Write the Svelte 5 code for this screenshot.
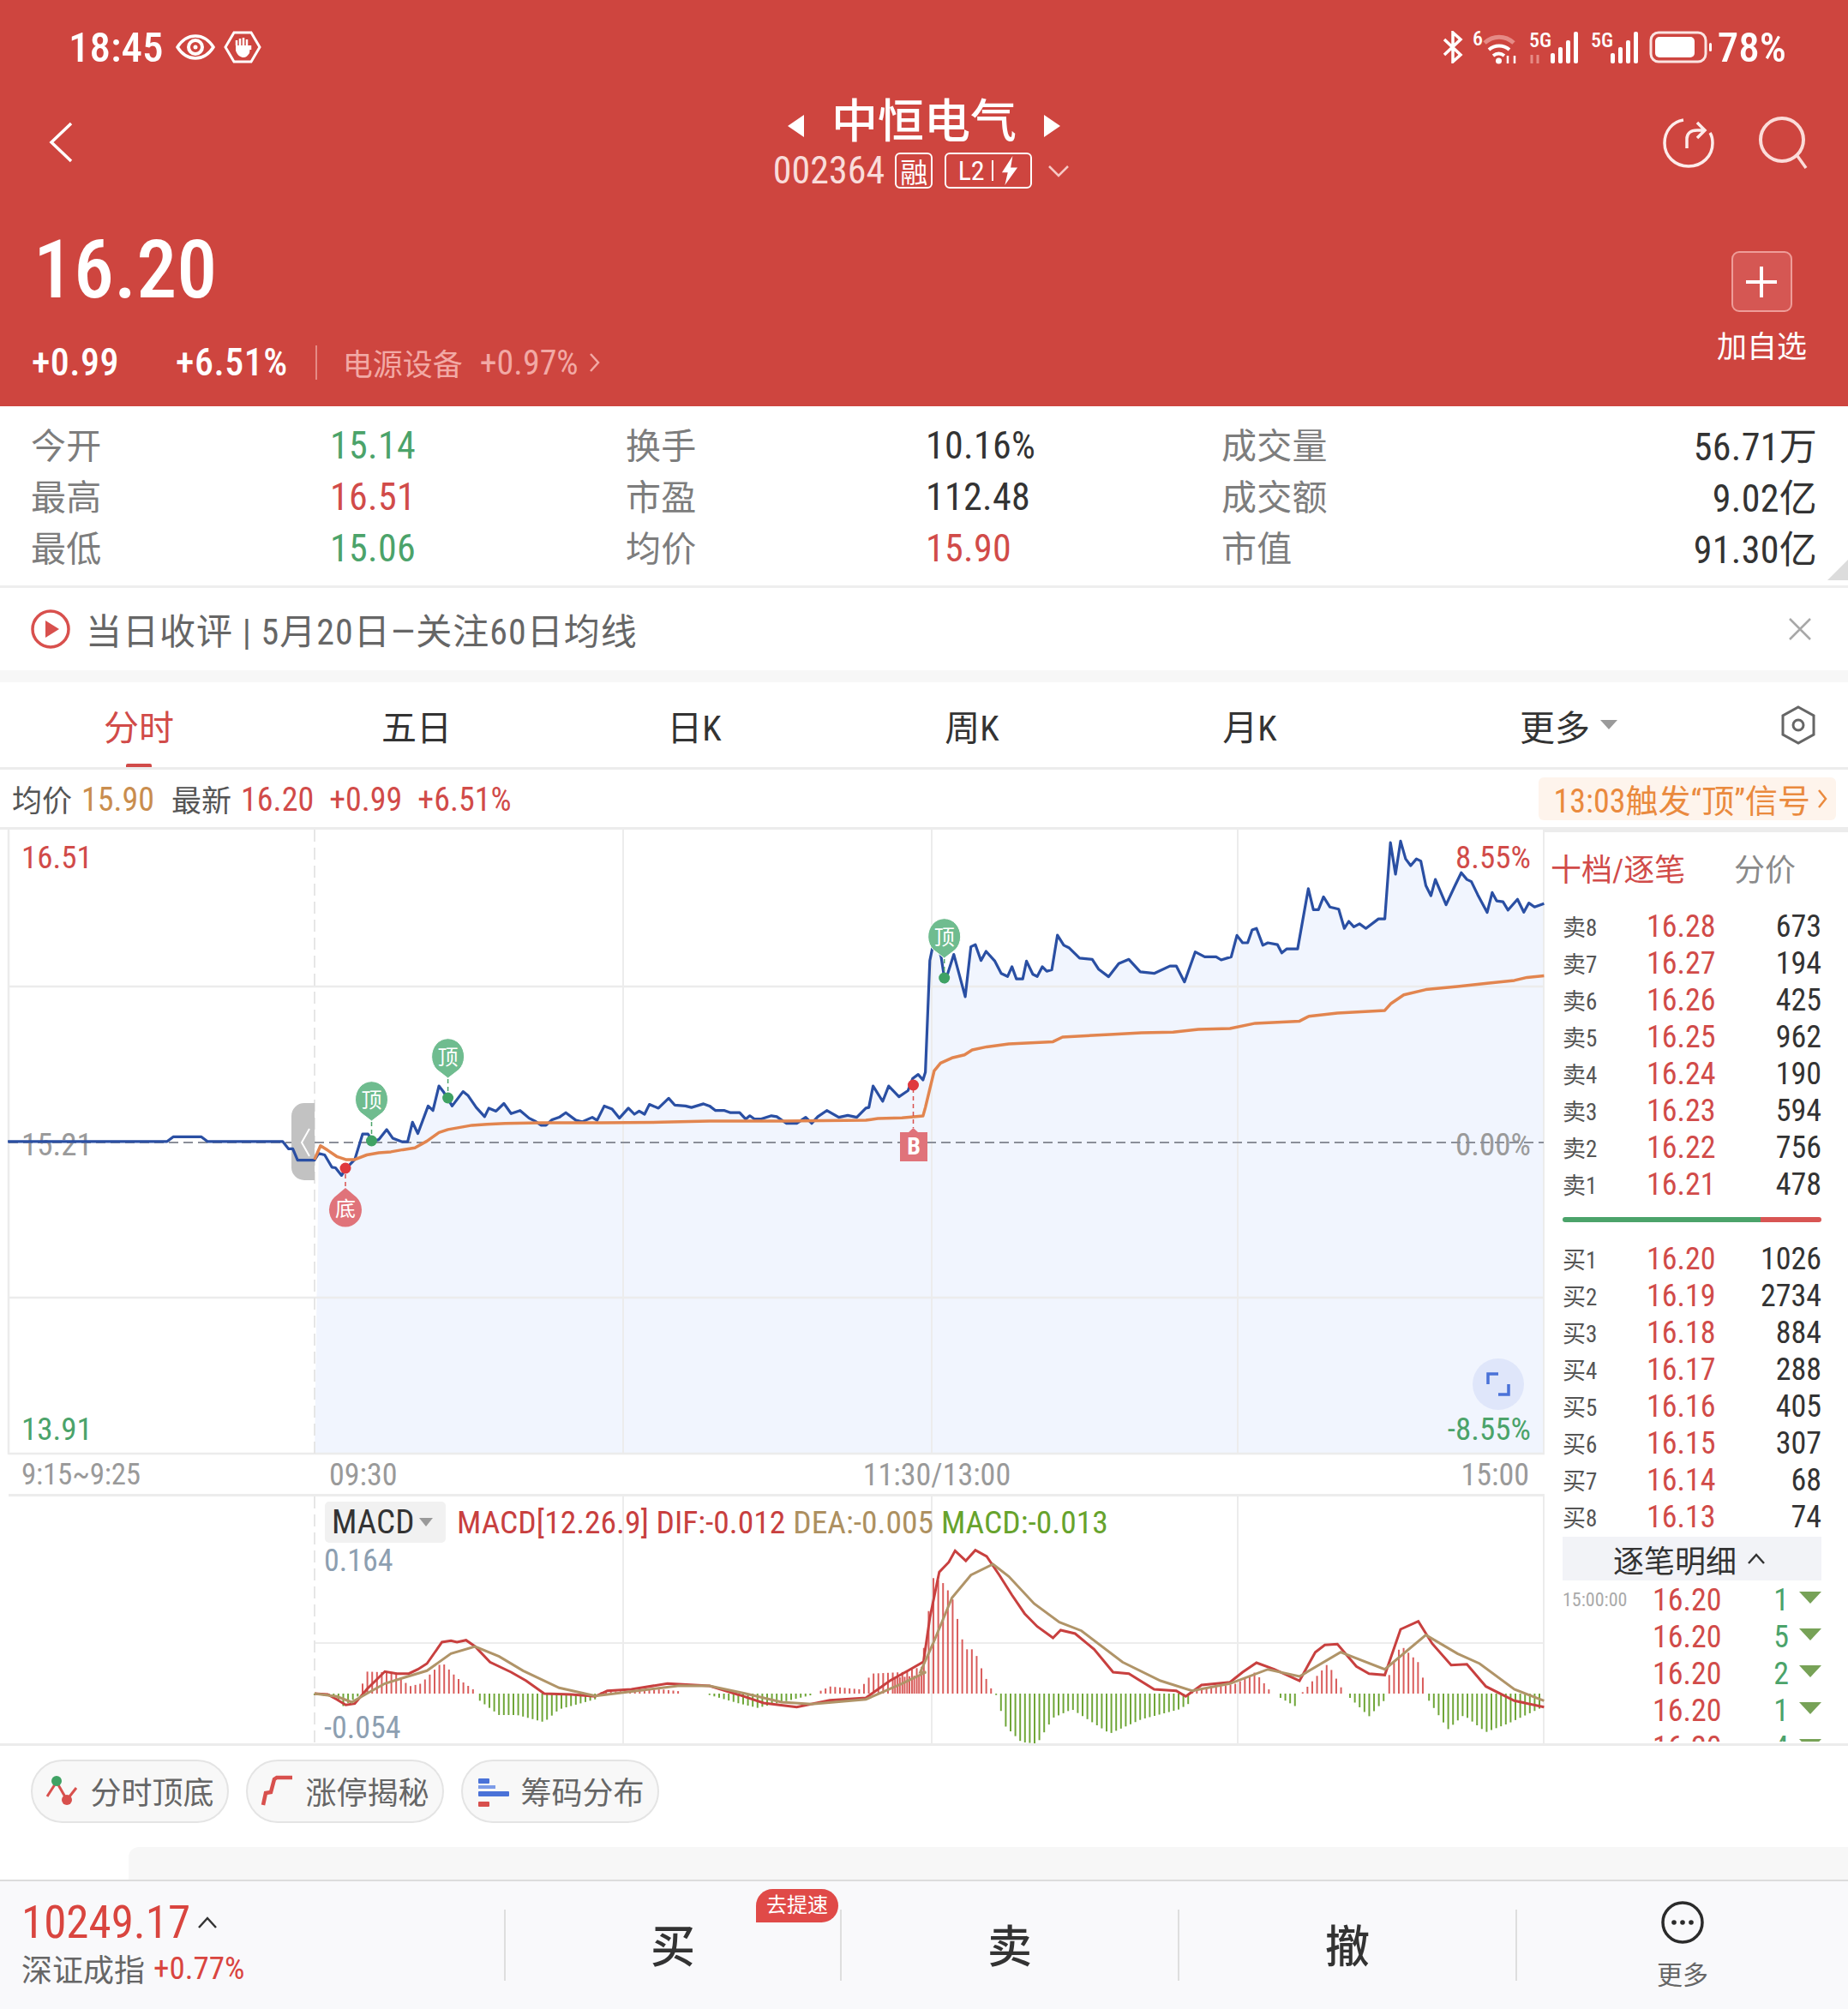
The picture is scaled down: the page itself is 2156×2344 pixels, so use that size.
<script>
  // page coords are traced from crops: a = left crops, b = right crops
  const a = ([x, y]) => [x / 1.4255, 960 + y / 2.8];
  const b = ([x, y]) => [1000 + x / 1.3564, 960 + y / 2.8];
  const ma = ([x, y]) => [x / 1.4255, 1700 + y / 3];
  const mb = ([x, y]) => [1000 + x / 1.3564, 1700 + y / 3];
  const str = (pts) => pts.map(([x, y]) => `${x.toFixed(1)},${y.toFixed(1)}`).join(' ');

  const price = [
    ...[[13,1041],[278,1041],[288,1026],[335,1026],[345,1041],[470,1041],[480,1065],[487,1065],[495,1102],[523,1102],[530,1080],[540,1085],[552,1125],[558,1127],[568,1152],[575,1130],[590,1100],[603,1017],[612,1017],[620,1040],[630,1035],[643,1002],[653,1030],[668,1042],[678,1042],[686,978],[695,1015],[712,925],[720,940],[730,860],[738,880],[752,925],[770,878],[778,890],[792,930],[806,960],[813,932],[825,942],[838,917],[850,950],[865,940],[880,965],[890,975],[900,988],[908,988],[918,970],[930,962],[941,947],[958,972],[968,977],[985,962],[993,972],[1005,925],[1018,935],[1030,965],[1045,932],[1055,952],[1063,942],[1072,952],[1080,920],[1095,932],[1112,900],[1122,922],[1140,925],[1150,930],[1170,918],[1180,925],[1190,940],[1205,940],[1215,947],[1230,947],[1240,968],[1247,957],[1255,968],[1265,968],[1283,957],[1292,960],[1308,982],[1325,982],[1340,962],[1350,982],[1360,960],[1375,940],[1395,962],[1410,956],[1425,962],[1440,932],[1445,930],[1452,860],[1468,910],[1478,860],[1495,895],[1510,875],[1518,835],[1527,822],[1535,840]].map(a),
    ...[[108,815],[115,450],[123,370],[133,440],[139,520],[153,430],[171,568],[180,405],[187,398],[196,450],[204,420],[218,452],[228,492],[238,502],[245,470],[252,510],[262,510],[268,452],[278,495],[285,502],[293,470],[300,485],[308,480],[317,367],[327,400],[335,408],[352,442],[372,446],[382,478],[398,503],[414,460],[430,446],[448,487],[470,492],[495,468],[505,468],[518,520],[535,422],[550,438],[568,438],[576,448],[592,438],[601,368],[610,392],[618,392],[625,350],[632,345],[642,400],[650,392],[665,398],[672,425],[680,412],[697,412],[714,215],[722,284],[730,284],[738,242],[748,275],[762,282],[771,345],[778,322],[786,340],[795,330],[805,345],[825,314],[835,314],[844,65],[852,168],[860,60],[868,118],[876,140],[885,118],[892,125],[900,205],[908,238],[915,185],[932,268],[945,210],[956,163],[965,185],[972,192],[982,235],[997,293],[1005,228],[1012,255],[1022,258],[1030,285],[1045,250],[1055,292],[1063,262],[1072,275],[1087,264]].map(b)
  ];
  const average = [
    ...[[523,1100],[533,1055],[545,1070],[560,1090],[575,1100],[590,1100],[610,1085],[630,1078],[650,1075],[670,1068],[690,1062],[710,1040],[730,1012],[745,1002],[765,995],[785,988],[810,985],[840,982],[900,980],[1000,980],[1100,978],[1180,974],[1300,974],[1440,972],[1460,966],[1500,964],[1535,958]].map(a),
    ...[[108,930],[122,810],[132,785],[150,768],[170,758],[182,742],[205,732],[240,722],[310,715],[325,700],[350,697],[400,692],[450,686],[500,684],[540,675],[590,672],[630,655],[700,648],[715,632],[760,622],[835,613],[845,590],[865,562],[900,545],[950,535],[1000,524],[1040,515],[1060,505],[1087,500]].map(b)
  ];
  const open = price.filter(([x]) => x >= 367);
  const area = [[367, 1697], ...open, [1801, 1697]];

  const dif = [
    ...[[523,825],[545,828],[560,845],[575,865],[590,860],[610,810],[640,748],[660,755],[680,755],[695,740],[710,720],[735,645],[750,640],[760,645],[775,638],[790,660],[815,715],[850,750],[875,780],[905,825],[950,828],[990,835],[1010,815],[1050,810],[1110,790],[1180,798],[1230,830],[1270,858],[1325,872],[1380,848],[1440,840],[1480,780],[1510,745],[1535,715]].map(ma),
    ...[[105,715],[115,560],[130,400],[145,365],[155,325],[172,360],[187,323],[205,345],[225,410],[245,480],[265,545],[285,590],[310,630],[322,603],[345,615],[375,670],[405,750],[430,755],[470,810],[505,815],[520,835],[545,795],[590,785],[610,750],[632,717],[660,740],[700,780],[725,680],[740,655],[760,652],[790,730],[810,755],[835,760],[860,600],[888,572],[910,650],[940,725],[965,722],[995,800],[1040,850],[1087,872]].map(mb)
  ];
  const dea = [
    ...[[523,825],[560,835],[585,855],[610,825],[640,790],[670,770],[710,745],[750,685],[790,660],[830,695],[870,745],[930,805],[990,833],[1060,815],[1130,797],[1180,798],[1240,825],[1300,855],[1350,862],[1440,845],[1500,790],[1540,750]].map(ma),
    ...[[100,750],[120,650],[150,490],[180,410],[215,372],[240,415],[280,510],[320,575],[355,605],[420,715],[480,780],[530,815],[590,790],[650,740],[700,765],[765,680],[835,740],[900,620],[950,685],[985,720],[1040,810],[1087,850]].map(mb)
  ];

  const ZERO = 1975;
  const histogram = [
    { up: false, pts: [[523,830],[560,835],[570,870],[595,835]].map(ma) },
    { up: true, pts: [[603,790],[610,748],[660,752],[680,800],[700,790],[735,715],[760,770],[790,815]].map(ma) },
    { up: false, pts: [[798,850],[830,900],[860,900],[905,925],[930,880],[990,845]].map(ma) },
    { up: true, pts: [[1000,820],[1100,810],[1135,818]].map(ma) },
    { up: false, pts: [[1180,830],[1230,860],[1260,875],[1350,830]].map(ma) },
    { up: true, pts: [[1365,815],[1380,800],[1430,810],[1450,755],[1500,750],[1535,730]].map(ma) },
    { up: true, pts: [[60,770],[100,760],[120,420],[135,435],[150,485],[160,575],[170,670],[185,670],[200,755],[215,820]].map(mb) },
    { up: false, pts: [[220,830],[235,940],[260,995],[285,1000],[310,910],[340,880],[400,965],[450,915],[510,880],[525,860]].map(mb) },
    { up: true, pts: [[530,815],[600,790],[630,750],[655,820]].map(mb) },
    { up: false, pts: [[670,840],[698,875]].map(mb) },
    { up: true, pts: [[705,820],[745,720],[770,820]].map(mb) },
    { up: false, pts: [[780,840],[810,905],[838,840]].map(mb) },
    { up: true, pts: [[842,760],[860,655],[890,720],[900,815]].map(mb) },
    { up: false, pts: [[905,850],[935,950],[960,900],[995,960],[1030,930],[1087,870]].map(mb) }
  ];
  const bars = [];
  for (const seg of histogram) {
    const start = seg.pts[0][0];
    const end = seg.pts[seg.pts.length - 1][0];
    for (let x = start; x <= end; x += 5.6) {
      const i = Math.max(1, seg.pts.findIndex((p) => p[0] >= x));
      const [x0, y0] = seg.pts[i - 1];
      const [x1, y1] = seg.pts[i];
      bars.push({ x, y: y0 + ((x - x0) / (x1 - x0 || 1)) * (y1 - y0), up: seg.up });
    }
  }

  const stats = [
    ['今开', '15.14', 'green', '换手', '10.16%', '', '成交量', '56.71万'],
    ['最高', '16.51', 'red', '市盈', '112.48', '', '成交额', '9.02亿'],
    ['最低', '15.06', 'green', '均价', '15.90', 'red', '市值', '91.30亿']
  ];
  const asks = [['卖8','16.28','673'],['卖7','16.27','194'],['卖6','16.26','425'],['卖5','16.25','962'],['卖4','16.24','190'],['卖3','16.23','594'],['卖2','16.22','756'],['卖1','16.21','478']];
  const bids = [['买1','16.20','1026'],['买2','16.19','2734'],['买3','16.18','884'],['买4','16.17','288'],['买5','16.16','405'],['买6','16.15','307'],['买7','16.14','68'],['买8','16.13','74']];
  const ticks = [['15:00:00','16.20','1'],['','16.20','5'],['','16.20','2'],['','16.20','1'],['','16.20','4']];
  const tabs = ['分时', '五日', '日K', '周K', '月K'];
  const tops = [[433.5, 1283, 1331], [522.6, 1233, 1281], [1101.7, 1093, 1141]];
</script>

<div class="page">
  <header class="head">
    <div class="status">
      <div class="status-left">
        <span class="clock">18:45</span>
        <svg width="46" height="30" viewBox="0 0 46 30" fill="none" stroke="#fff"><path d="M2 15C9 4 16 2 23 2s14 2 21 13c-7 11-14 13-21 13S9 26 2 15z" stroke-width="3.5"/><circle cx="23" cy="15" r="8" stroke-width="4"/><circle cx="23" cy="15" r="2.5" fill="#fff" stroke="none"/></svg>
        <svg class="hand" width="44" height="38" viewBox="0 0 44 38" fill="none"><path d="M12 2h20l10 17-10 17H12L2 19z" stroke="#fff" stroke-width="3"/><path d="M15 17v-6M19 18v-9M23 18v-10M27 18v-8M31 22v-5" stroke="#fff" stroke-width="2.500"/><path d="M14 17h17l-1 9c-2 3-4 5-7 5s-7-2-9-8z" fill="#fff"/></svg>
      </div>
      <div class="status-right">
        <svg class="bt" width="26" height="38" viewBox="0 0 26 38" fill="none" stroke="#fff" stroke-width="3.5"><path d="M3 10l19 18-9 8V2l9 8L3 28"/></svg>
        <svg width="56" height="54" viewBox="0 -6 56 54" fill="none"><text x="0" y="19" class="sig">6</text><path d="M14 16c10-9 24-9 34 0" stroke="#e58b86" stroke-width="5"/><path d="M19 24c7-6 17-6 24 0M24 31c4-3 9-3 13 0" stroke="#fff" stroke-width="4"/><circle cx="30.500" cy="37" r="3.500" fill="#fff"/><path d="M41 40v-9M49 31v9" stroke="#fff" stroke-width="2.500"/></svg>
        <svg width="62" height="52" viewBox="0 -6 62 52"><text x="0" y="20" class="sig">5G</text><g fill="#fff"><rect x="25" y="27" width="5" height="12" rx="2"/><rect x="34" y="20" width="5" height="19" rx="2"/><rect x="43" y="12" width="5" height="27" rx="2"/><rect x="52" y="2" width="5" height="37" rx="2"/></g><path d="M3 39v-10M10 29v10" stroke="#e58b86" stroke-width="3"/></svg>
        <svg width="58" height="52" viewBox="0 -6 58 52"><text x="0" y="20" class="sig">5G</text><g fill="#fff"><rect x="23" y="27" width="5" height="12" rx="2"/><rect x="32" y="20" width="5" height="19" rx="2"/><rect x="41" y="12" width="5" height="27" rx="2"/><rect x="50" y="2" width="5" height="37" rx="2"/></g></svg>
        <svg width="74" height="38" viewBox="0 0 74 38" fill="none"><rect x="2" y="2" width="64" height="34" rx="9" stroke="#fbe4e2" stroke-width="3"/><rect x="7" y="7" width="46" height="24" rx="5" fill="#fff"/><rect x="70" y="14" width="3" height="10" rx="1.500" fill="#fff"/></svg>
        <span class="clock batt">78%</span>
      </div>
    </div>

    <div class="nav">
      <svg class="back" width="30" height="48" viewBox="0 0 30 48" fill="none" stroke="#fff" stroke-width="3.500"><path d="M27 2L4 24l23 22"/></svg>
      <div class="nav-mid">
        <div class="title-row">
          <span class="tri-l"></span>
          <span class="title">中恒电气</span>
          <span class="tri-r"></span>
        </div>
        <div class="code-row">
          <span class="code">002364</span>
          <span class="tag rong">融</span>
          <span class="tag l2">L2<i class="bar"></i>
            <svg width="22" height="34" viewBox="0 0 18 30"><path d="M12 0L1 17h6L4 30l13-18h-7z" fill="#fff"/></svg>
          </span>
          <svg width="26" height="15" viewBox="0 0 26 15" fill="none" stroke="#f6c9c5" stroke-width="2.500"><path d="M2 2l11 11L24 2"/></svg>
        </div>
      </div>
      <div class="nav-icons">
        <svg width="60" height="62" viewBox="0 0 60 62" fill="none" stroke="#fdeceb" stroke-width="3.500"><path d="M24 5C11 7 2 18 2 32c0 15 12 27 28 27s28-12 28-27c0-5-1-9-3-12"/><path d="M28 38V27c0-6 4-10 12-10h7M40 8l9 9-9 9"/></svg>
        <svg width="60" height="62" viewBox="0 0 60 62" fill="none"><circle cx="27" cy="28" r="25" stroke="#fbdcd9" stroke-width="4"/><path d="M45 47l10 14" stroke="#fbdcd9" stroke-width="3.500"/></svg>
      </div>
    </div>

    <div class="quote">
      <div>
        <div class="last">16.20</div>
        <div class="change">
          <span class="c1">+0.99</span>
          <span class="c2">+6.51%</span>
          <i class="sep"></i>
          <span class="sector">电源设备</span>
          <span class="sector-num">+0.97%</span>
          <svg width="13" height="24" viewBox="0 0 13 24" fill="none" stroke="#f2a9a5" stroke-width="2.500"><path d="M2 2l9 10-9 10"/></svg>
        </div>
      </div>
      <div class="add">
        <div class="add-box">
          <svg width="36" height="36" viewBox="0 0 36 36" stroke="#fff" stroke-width="4"><path d="M18 0v36M0 18h36"/></svg>
        </div>
        <span>加自选</span>
      </div>
    </div>
  </header>

  <section class="stats">
    {#each stats as r}
      <span class="lbl">{r[0]}</span><span class="val {r[2]}">{r[1]}</span>
      <span class="lbl">{r[3]}</span><span class="val {r[5]}">{r[4]}</span>
      <span class="lbl">{r[6]}</span><span class="val end">{r[7]}</span>
    {/each}
    <i class="corner"></i>
  </section>

  <section class="news">
    <svg width="46" height="46" viewBox="0 0 46 46"><circle cx="23" cy="23" r="21" fill="none" stroke="#d8504d" stroke-width="3.500"/><path d="M17 13l16 10-16 10z" fill="#d8504d"/></svg>
    <span class="news-text">当日收评 | 5月20日—关注60日均线</span>
    <svg class="close" width="28" height="28" viewBox="0 0 28 28" stroke="#a8a8a8" stroke-width="2.500"><path d="M2 2l24 24M26 2L2 26"/></svg>
  </section>
  <div class="gap"></div>

  <nav class="tabs">
    {#each tabs as t, i}
      <span class="tab" class:on={i === 0}>{t}</span>
    {/each}
    <span class="tab">更多<i class="more-tri"></i></span>
    <span class="tab">
      <svg width="42" height="46" viewBox="0 0 42 46" fill="none" stroke="#666" stroke-width="3"><path d="M21 2l18 10v22L21 44 3 34V12z"/><circle cx="21" cy="23" r="6"/></svg>
    </span>
  </nav>

  <div class="info">
    <span class="i-l">均价</span><span class="i-n orange">15.90</span>
    <span class="i-l g">最新</span><span class="i-n red">16.20</span>
    <span class="i-n red g2">+0.99</span><span class="i-n red g2">+6.51%</span>
    <span class="signal">13:03触发“顶”信号
      <svg width="12" height="24" viewBox="0 0 12 24" fill="none" stroke="#ea8a3e" stroke-width="2.500"><path d="M2 2l8 10-8 10"/></svg>
    </span>
  </div>

  <div class="board">
    <div class="charts">
      <svg class="price-chart" width="1802" height="730" viewBox="0 968 1802 730">
        <polygon points={str(area)} fill="#f1f5fe" />
        <g stroke="#ececec" stroke-width="2.500">
          <path d="M10 1151H1802M10 1514H1802M10 1696H1802M10 968V1697"/>
          <path d="M727 968V1697M1087 968V1697M1444 968V1697M1801 968V1697" stroke-width="2"/>
        </g>
        <path d="M367 968V1697" stroke="#e6e6e6" stroke-width="2" stroke-dasharray="14 7"/>

        <text x="25" y="1013" class="axis red-t">16.51</text>
        <text x="25" y="1348" class="axis gray-t">15.21</text>
        <text x="25" y="1680" class="axis green-t">13.91</text>
        <text x="1786" y="1013" class="axis red-t" text-anchor="end">8.55%</text>
        <text x="1786" y="1348" class="axis gray-t" text-anchor="end">0.00%</text>
        <text x="1786" y="1680" class="axis green-t" text-anchor="end">-8.55%</text>

        <path d="M10 1333H1801" stroke="#8b8f99" stroke-width="2" stroke-dasharray="11 6"/>
        <path d="M367 1287h-12a15 15 0 0 0-15 15v60a15 15 0 0 0 15 15h12z" fill="#c2c2c2"/>
        <path d="M361 1317l-9 16 9 16" fill="none" stroke="#fff" stroke-width="2"/>

        <polyline points={str(price)} fill="none" stroke="#2a4fa3" stroke-width="3.200" stroke-linejoin="round"/>
        <polyline points={str(average)} fill="none" stroke="#e2854f" stroke-width="3.500" stroke-linejoin="round"/>

        {#each tops as [x, pin, dot]}
          <path d="M{x} {pin + 25}l-13-10a19 21 0 1 1 26 0z" fill="#6fbc8f" stroke="#fff" stroke-width="1"/>
          <text x={x} y={pin + 9} class="pin">顶</text>
          <path d="M{x} {pin + 26}V{dot}" stroke="#4ba36a" stroke-width="1.500" stroke-dasharray="5 4"/>
          <circle cx={x} cy={dot} r="6.500" fill="#3fa264"/>
        {/each}

        <path d="M403 1370V1390" stroke="#d8504d" stroke-width="1.500" stroke-dasharray="5 4"/>
        <circle cx="403" cy="1363" r="6.500" fill="#e0393e"/>
        <path d="M403 1386l-13 11a19 20 0 1 0 26 0z" fill="#e0737a"/>
        <text x="403" y="1419" class="pin">底</text>

        <path d="M1065.500 1270V1316" stroke="#d8504d" stroke-width="1.500" stroke-dasharray="5 4"/>
        <circle cx="1065.500" cy="1266" r="6.500" fill="#e0393e"/>
        <path d="M1050 1321h10l5.500-5 5.500 5h11v34h-32z" fill="#e0737a"/>
        <text x="1066" y="1347" class="pin b">B</text>

        <circle cx="1748" cy="1615" r="30" fill="#dfe6fa"/>
        <path d="M1736 1615v-12h12M1760 1615v12h-12" fill="none" stroke="#4a72d8" stroke-width="3.500"/>
      </svg>

      <div class="axis-row">
        <span class="pre">9:15~9:25</span>
        <div class="times">
          <span>09:30</span><span class="mid">11:30/13:00</span><span>15:00</span>
        </div>
      </div>

      <div class="macd">
        <svg width="1802" height="288" viewBox="0 1745 1802 288">
          <g stroke="#ececec" stroke-width="2">
            <path d="M367 1916H1802M727 1745V2033M1087 1745V2033M1444 1745V2033M1801 1745V2033"/>
          </g>
          <path d="M367 1745V2033" stroke="#e6e6e6" stroke-width="2" stroke-dasharray="14 7"/>
          {#each bars as bar}
            <line x1={bar.x} x2={bar.x} y1={ZERO} y2={bar.y} stroke={bar.up ? '#d95c5b' : '#6fa638'} stroke-width="2"/>
          {/each}
          <polyline points={str(dif)} fill="none" stroke="#c8403f" stroke-width="3"/>
          <polyline points={str(dea)} fill="none" stroke="#b09468" stroke-width="3"/>
        </svg>
        <div class="legend">
          <span class="chip">MACD<i class="chip-tri"></i></span>
          <span class="m-red">MACD[12.26.9] DIF:-0.012</span>
          <span class="m-tan">DEA:-0.005</span>
          <span class="m-green">MACD:-0.013</span>
        </div>
        <span class="scale hi">0.164</span>
        <span class="scale lo">-0.054</span>
      </div>
    </div>

    <aside class="book">
      <div class="book-head"><span class="on">十档/逐笔</span><span>分价</span></div>
      {#each asks as r}
        <div class="row"><span class="side">{r[0]}</span><span class="p">{r[1]}</span><span class="q">{r[2]}</span></div>
      {/each}
      <div class="ratio"><i class="buy"></i><i class="sell"></i></div>
      {#each bids as r}
        <div class="row"><span class="side">{r[0]}</span><span class="p">{r[1]}</span><span class="q">{r[2]}</span></div>
      {/each}
      <div class="detail">逐笔明细
        <svg width="22" height="14" viewBox="0 0 22 14" fill="none" stroke="#333" stroke-width="2.500"><path d="M2 12L11 2l9 10"/></svg>
      </div>
      <div class="ticks">
        {#each ticks as r}
          <div class="tick"><span class="t">{r[0]}</span><span class="p">{r[1]}</span><span class="v">{r[2]}</span><i class="down"></i></div>
        {/each}
      </div>
    </aside>
  </div>

  <div class="pills">
    <span class="pill">
      <svg width="40" height="40" viewBox="0 0 40 40" fill="none"><path d="M2 26L13 9" stroke="#d8504d" stroke-width="3"/><path d="M13 9l12 21" stroke="#d8504d" stroke-width="3"/><path d="M25 30l11-14" stroke="#d8504d" stroke-width="3"/><circle cx="13" cy="8" r="6" fill="#3fa264"/><circle cx="25" cy="30" r="6" fill="#d8504d"/></svg>
      <span class="pill-text">分时顶底</span>
    </span>
    <span class="pill">
      <svg width="40" height="40" viewBox="0 0 40 40" fill="none" stroke="#d8504d" stroke-width="4.500"><path d="M3 36l3-14 6-1 4-15 3-2h18"/></svg>
      <span class="pill-text">涨停揭秘</span>
    </span>
    <span class="pill">
      <svg width="40" height="40" viewBox="0 0 40 40"><rect x="3" y="5" width="13" height="6" rx="1" fill="#4a72d8"/><rect x="3" y="13" width="20" height="4" fill="#7d9ce8"/><rect x="3" y="20" width="36" height="6" rx="1" fill="#4a72d8"/><rect x="3" y="32" width="13" height="6" rx="1" fill="#d8504d"/></svg>
      <span class="pill-text">筹码分布</span>
    </span>
  </div>
  <div class="strip"><i></i></div>

  <footer class="bottom">
    <div class="index">
      <div class="index-top">
        <span class="idx">10249.17</span>
        <svg width="24" height="15" viewBox="0 0 24 15" fill="none" stroke="#333" stroke-width="2.500"><path d="M2 13L12 2l10 11"/></svg>
      </div>
      <div class="index-sub"><span>深证成指</span><span class="idx-pct">+0.77%</span></div>
    </div>
    <div class="act"><span class="act-text">买</span><span class="speed">去提速</span></div>
    <div class="act"><span class="act-text">卖</span></div>
    <div class="act"><span class="act-text">撤</span></div>
    <div class="more">
      <svg width="50" height="50" viewBox="0 0 50 50" fill="none"><circle cx="25" cy="25" r="23" stroke="#2b2b2b" stroke-width="3.500"/><circle cx="15" cy="25" r="2.800" fill="#2b2b2b"/><circle cx="25" cy="25" r="2.800" fill="#2b2b2b"/><circle cx="35" cy="25" r="2.800" fill="#2b2b2b"/></svg>
      <span>更多</span>
    </div>
  </footer>
</div>

<style>
  :global(body) {
    margin: 0;
    background: #fff;
  }

  .page {
    width: 2156px;
    height: 2344px;
    overflow: hidden;
    font-family: "Roboto", "Noto Sans CJK SC", sans-serif;
    color: #333;
    font-stretch: 75%;
  }

  i {
    display: block;
    font-style: normal;
  }

  /* header */
  .head {
    height: 474px;
    background: #ce453f;
    color: #fff;
  }

  .status {
    height: 110px;
    display: flex;
    justify-content: space-between;
    align-items: center;
    padding: 0 72px 0 80px;
  }

  .status-left,
  .status-right {
    display: flex;
    align-items: center;
  }

  .status-left {
    gap: 14px;
  }

  .hand {
    margin-left: -4px;
  }

  .status-right {
    gap: 10px;
  }

  .clock {
    font-size: 49px;
    font-weight: 500;
  }

  .batt {
    margin-left: -4px;
  }

  .sig {
    font: 500 24px "Roboto", sans-serif;
    font-stretch: 75%;
    fill: #fff;
  }

  .nav {
    height: 120px;
    display: flex;
    align-items: center;
    position: relative;
    padding: 0 44px 0 56px;
    justify-content: space-between;
  }

  .back {
    margin-bottom: 8px;
  }

  .nav-mid {
    position: absolute;
    left: 0;
    right: 0;
    top: 0;
    display: flex;
    flex-direction: column;
    align-items: center;
  }

  .title-row {
    display: flex;
    align-items: center;
    gap: 32px;
    height: 62px;
    padding-top: 2px;
  }

  .title {
    font-size: 54px;
    font-weight: 500;
    line-height: 62px;
  }

  .tri-l,
  .tri-r {
    width: 0;
    height: 0;
    border-top: 13px solid transparent;
    border-bottom: 13px solid transparent;
    margin-top: 8px;
  }

  .tri-l {
    border-right: 19px solid #fff;
  }

  .tri-r {
    border-left: 19px solid #fff;
  }

  .code-row {
    display: flex;
    align-items: center;
    height: 42px;
    margin-top: 4px;
    gap: 12px;
    margin-right: 6px;
  }

  .code {
    font-size: 44px;
    color: #f9dcda;
  }

  .tag {
    box-sizing: border-box;
    height: 42px;
    border: 2px solid #fff;
    border-radius: 6px;
    display: flex;
    align-items: center;
    justify-content: center;
    font-size: 32px;
  }

  .rong {
    width: 44px;
  }

  .l2 {
    width: 102px;
    gap: 8px;
    margin-left: 2px;
    margin-right: 6px;
  }

  .bar {
    width: 2px;
    height: 24px;
    background: #fff;
  }

  .nav-icons {
    display: flex;
    gap: 52px;
    position: relative;
    margin-bottom: 8px;
  }

  .quote {
    height: 244px;
    display: flex;
    justify-content: space-between;
    padding: 0 48px 0 37px;
  }

  .last {
    font-size: 94px;
    line-height: 90px;
    margin-top: 40px;
    margin-left: 2px;
    font-weight: 500;
  }

  .change {
    display: flex;
    align-items: center;
    margin-top: 42px;
    height: 42px;
    font-size: 44px;
    letter-spacing: 0.5px;
    font-weight: 500;
  }

  .c2 {
    margin-left: 66px;
  }

  .sep {
    width: 2px;
    height: 40px;
    background: #e58b86;
    margin: 0 30px 0 32px;
  }

  .sector {
    font-size: 35px;
    font-weight: 400;
    letter-spacing: 0;
    color: #f2a9a5;
    margin-bottom: 2px;
  }

  .sector-num {
    font-size: 40px;
    font-weight: 400;
    letter-spacing: 0;
    color: #f2a9a5;
    margin: 0 12px 0 20px;
  }

  .add {
    display: flex;
    flex-direction: column;
    align-items: center;
    margin-top: 63px;
  }

  .add-box {
    box-sizing: border-box;
    width: 71px;
    height: 71px;
    background: #d55753;
    border: 2px solid #ee9d99;
    border-radius: 9px;
    display: flex;
    align-items: center;
    justify-content: center;
  }

  .add span {
    font-size: 35px;
    line-height: 44px;
    margin-top: 20px;
  }

  /* stats */
  .stats {
    position: relative;
    box-sizing: border-box;
    height: 212px;
    padding: 16px 36px 0;
    display: grid;
    grid-template-columns: 349px 345px 350px 345px 1fr 200px;
    grid-auto-rows: 60px;
    align-items: center;
    border-bottom: 3px solid #eeeeee;
    font-size: 44px;
    letter-spacing: 0.3px;
  }

  .lbl {
    font-size: 41px;
    color: #7d7d7d;
    margin-bottom: 6px;
  }

  .val.end {
    text-align: right;
    margin-bottom: 4px;
  }

  .corner {
    position: absolute;
    right: 0;
    bottom: 6px;
    width: 0;
    height: 0;
    border-left: 24px solid transparent;
    border-bottom: 24px solid #dcdcdc;
  }

  .green {
    color: #4ba36a;
  }

  .red {
    color: #d14b49;
  }

  .orange {
    color: #c98d4e;
  }

  /* news */
  .news {
    height: 96px;
    display: flex;
    align-items: center;
    padding: 0 42px 0 36px;
    gap: 18px;
  }

  .news-text {
    font-size: 42px;
    letter-spacing: 1px;
    color: #666;
    margin-bottom: 2px;
  }

  .close {
    margin-left: auto;
  }

  .gap {
    height: 14px;
    background: #f7f7f7;
  }

  /* tabs */
  .tabs {
    box-sizing: border-box;
    height: 102px;
    display: grid;
    grid-template-columns: repeat(5, 324px) 420px 1fr;
    border-bottom: 3px solid #ececec;
    font-size: 41px;
  }

  .tab {
    position: relative;
    display: flex;
    align-items: center;
    justify-content: center;
    gap: 12px;
  }

  .tab.on {
    color: #d14b49;
  }

  .tab.on::after {
    content: "";
    position: absolute;
    left: 147px;
    bottom: 0;
    width: 30px;
    height: 4px;
    background: #d14b49;
    border-radius: 2px 2px 0 0;
  }

  .more-tri {
    width: 0;
    height: 0;
    border-left: 10px solid transparent;
    border-right: 10px solid transparent;
    border-top: 11px solid #9a9a9a;
  }

  /* info row */
  .info {
    box-sizing: border-box;
    height: 70px;
    display: flex;
    align-items: center;
    padding: 0 14px;
    font-size: 34px;
    border-bottom: 3px solid #ececec;
  }

  .i-l {
    color: #555;
    font-size: 35px;
  }

  .i-n {
    margin-left: 11px;
    margin-top: 3px;
    font-size: 38px;
  }

  .g {
    margin-left: 20px;
  }

  .g2 {
    margin-left: 18px;
  }

  .signal {
    margin-left: auto;
    height: 50px;
    background: #fef4ec;
    color: #ea8a3e;
    border-radius: 6px;
    padding: 0 10px 0 18px;
    display: flex;
    align-items: center;
    gap: 8px;
    font-size: 38px;
  }

  /* chart + order book */
  .board {
    display: flex;
    height: 1066px;
  }

  .charts {
    width: 1802px;
    flex: none;
  }

  .price-chart,
  .macd svg {
    display: block;
  }

  .axis {
    font-size: 37px;
    font-family: "Roboto", sans-serif;
    font-stretch: 75%;
  }

  .red-t {
    fill: #d14b49;
  }

  .gray-t {
    fill: #9a9a9a;
  }

  .green-t {
    fill: #4ba36a;
  }

  .pin {
    font-size: 24px;
    fill: #fff;
    text-anchor: middle;
  }

  .pin.b {
    font-weight: 700;
    font-size: 28px;
  }

  .axis-row {
    box-sizing: border-box;
    height: 48px;
    display: flex;
    align-items: center;
    padding-left: 15px;
    border-bottom: 3px solid #ececec;
    margin-left: 10px;
    font-size: 36px;
    color: #9a9a9a;
  }

  .pre {
    width: 342px;
    font-size: 35px;
    letter-spacing: -0.2px;
  }

  .times {
    flex: 1;
    display: flex;
    justify-content: space-between;
    padding: 0 18px 0 17px;
  }

  .mid {
    margin-left: 18px;
  }

  .macd {
    position: relative;
    height: 288px;
    border-bottom: 3px solid #ececec;
  }

  .legend {
    position: absolute;
    left: 379px;
    top: 6px;
    display: flex;
    align-items: center;
    gap: 9px;
    font-size: 37.500px;
    white-space: nowrap;
  }

  .chip {
    box-sizing: border-box;
    width: 141px;
    height: 48px;
    background: #f1f1f1;
    border-radius: 5px;
    padding-left: 8px;
    display: flex;
    align-items: center;
    gap: 6px;
    font-size: 39px;
    margin-right: 4px;
  }

  .chip-tri {
    width: 0;
    height: 0;
    border-left: 8px solid transparent;
    border-right: 8px solid transparent;
    border-top: 10px solid #9a9a9a;
  }

  .m-red {
    color: #c8403f;
  }

  .m-tan {
    color: #ad9060;
  }

  .m-green {
    color: #67a32d;
  }

  .scale {
    position: absolute;
    left: 378px;
    font-size: 36px;
    color: #8d9fb1;
  }

  .hi {
    top: 54px;
  }

  .lo {
    top: 249px;
  }

  .book {
    flex: 1;
    box-sizing: border-box;
    padding-left: 21px;
    padding-right: 31px;
    border-top: 3px solid #ececec;
    height: 1069px;
    border-bottom: 3px solid #ececec;
  }

  .book-head {
    height: 88px;
    display: flex;
    align-items: center;
    justify-content: space-between;
    margin-left: -14px;
    padding-right: 30px;
    font-size: 36px;
    color: #8a8a8a;
    margin-top: -3px;
    margin-bottom: 3px;
  }

  .book-head .on {
    color: #d14b49;
  }

  .row {
    height: 43px;
    display: flex;
    align-items: center;
  }

  .side {
    width: 98px;
    font-size: 27px;
    color: #555;
  }

  .p {
    color: #d14b49;
    font-size: 36px;
  }

  .q {
    margin-left: auto;
    font-size: 36px;
    color: #333;
  }

  .ratio {
    display: flex;
    height: 6px;
    margin: 17px 0 21px;
    border-radius: 3px;
    overflow: hidden;
  }

  .buy {
    width: 231px;
    background: #4ba36a;
  }

  .sell {
    flex: 1;
    background: #d85553;
  }

  .detail {
    box-sizing: border-box;
    height: 51px;
    margin-top: 2px;
    padding-right: 6px;
    background: #f2f3f7;
    display: flex;
    align-items: center;
    justify-content: center;
    gap: 12px;
    font-size: 36px;
    color: #333;
  }

  .ticks {
    height: 187px;
    overflow: hidden;
    padding-top: 1px;
  }

  .tick {
    height: 43px;
    display: flex;
    align-items: center;
  }

  .t {
    width: 105px;
    font-size: 22px;
    color: #aaa;
  }

  .v {
    margin-left: auto;
    font-size: 36px;
    color: #4ba36a;
    margin-right: 12px;
  }

  .down {
    width: 0;
    height: 0;
    border-left: 13px solid transparent;
    border-right: 13px solid transparent;
    border-top: 14px solid #77a257;
    margin-bottom: 6px;
  }

  /* shortcuts */
  .pills {
    height: 121px;
    box-sizing: border-box;
    padding: 19px 36px 0;
    display: flex;
    gap: 20px;
  }

  .pill {
    box-sizing: border-box;
    width: 231px;
    height: 74px;
    background: #f8f8f8;
    border: 2px solid #e4e4e4;
    border-radius: 37px;
    display: flex;
    align-items: center;
    justify-content: center;
    gap: 12px;
    font-size: 36px;
    color: #666;
  }

  .pill-text {
    margin-bottom: 2px;
  }

  .strip {
    height: 38px;
    padding-left: 150px;
  }

  .strip i {
    height: 100%;
    background: #f7f7f7;
    border-radius: 12px 0 0 0;
  }

  /* bottom bar */
  .bottom {
    box-sizing: border-box;
    height: 151px;
    background: #f9f9fb;
    border-top: 2px solid #dcdcdc;
    display: grid;
    grid-template-columns: 588px 394px 394px 394px 1fr;
    align-items: center;
  }

  .index {
    padding-left: 25px;
    margin-top: -4px;
  }

  .index-top {
    display: flex;
    align-items: center;
    gap: 8px;
  }

  .idx {
    font-size: 53px;
    color: #d9453f;
    font-weight: 400;
    line-height: 60px;
  }

  .index-sub {
    display: flex;
    align-items: center;
    gap: 10px;
    margin-top: -3px;
    font-size: 36px;
    color: #666;
  }

  .idx-pct {
    font-size: 37px;
    color: #d9453f;
  }

  .act {
    position: relative;
    height: 83px;
    display: flex;
    align-items: center;
    justify-content: center;
    border-right: 2px solid #dedede;
    font-size: 52px;
    font-weight: 500;
    color: #333;
  }

  .act-text {
    margin-bottom: 4px;
  }

  .act:nth-child(2) {
    border-left: 2px solid #dedede;
  }

  .speed {
    position: absolute;
    right: 2px;
    top: -24px;
    width: 96px;
    height: 39px;
    background: #e04a48;
    border-radius: 20px 20px 20px 0;
    color: #fff;
    font-size: 24px;
    font-weight: 400;
    line-height: 39px;
    text-align: center;
  }

  .more {
    display: flex;
    flex-direction: column;
    align-items: center;
    gap: 12px;
    font-size: 30px;
    color: #666;
    margin-top: 3px;
  }

  .more svg {
    display: block;
  }
</style>
